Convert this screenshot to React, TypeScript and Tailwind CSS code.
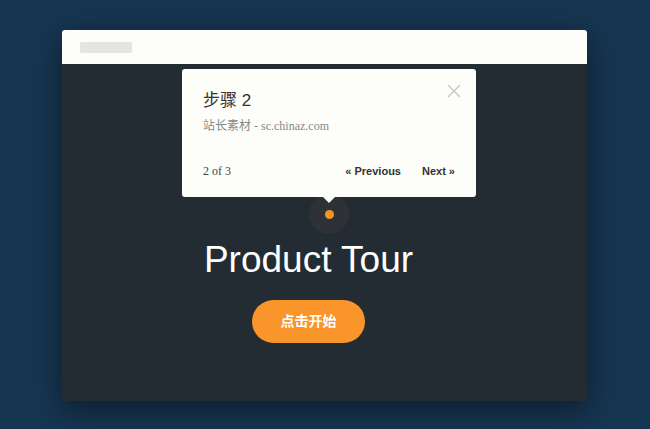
import { X } from 'lucide-react'

const SANS = { fontFamily: '"Liberation Sans", "Noto Sans CJK SC", sans-serif' }
const SERIF = { fontFamily: '"Liberation Serif", "Noto Sans CJK SC", serif' }

function Tooltip() {
  return (
    <div className="absolute left-[120px] top-[39px] w-[294px] h-[128px] rounded-[3px] bg-[#fdfdf9] pl-[21px] pr-[20px] pt-[20px] flex flex-col">
      <button className="absolute top-[11px] right-[11px] text-[#c4c4c0]" aria-label="Close">
        <X size={22} strokeWidth={1.4} />
      </button>
      <p className="text-[17px] leading-[24px] text-[#333]" style={SANS}>步骤 2</p>
      <p className="mt-[5px] text-[12px] leading-[16px] text-[#888]" style={SERIF}>站长素材 - sc.chinaz.com</p>
      <div className="mt-[28px] flex items-center pr-[1px]">
        <span className="text-[12px] text-[#444]" style={SERIF}>2 of 3</span>
        <button className="ml-auto text-[11px] font-bold text-[#333]" style={SANS}>« Previous</button>
        <button className="ml-[21px] text-[11px] font-bold text-[#333]" style={SANS}>Next »</button>
      </div>
      {/* arrow */}
      <div className="absolute left-[141px] -bottom-[6px] w-0 h-0 border-l-[6px] border-r-[6px] border-t-[6px] border-l-transparent border-r-transparent border-t-[#fdfdf9]" />
    </div>
  )
}

export default function App() {
  return (
    <div className="w-[650px] h-[429px] bg-[#163550] pl-[62px] pt-[30px] overflow-hidden">
      <div className="relative w-[525px] h-[371px] rounded-[3px] bg-[#232c32] shadow-[0_8px_28px_rgba(0,0,0,0.45)] flex flex-col">
        <div className="h-[34px] rounded-t-[3px] bg-[#fdfdf9] flex items-center pl-[18px]">
          <div className="w-[52px] h-[11px] rounded-[2px] bg-[#e4e4e0]" />
        </div>

        <div className="flex-1 flex flex-col items-center pr-[32px] pt-[177px]">
          <h1 className="text-[37px] leading-[37px] text-white" style={SANS}>Product Tour</h1>
          <button
            className="mt-[22px] w-[113px] h-[43px] rounded-full bg-[#f9952a] text-white text-[14px] font-bold"
            style={SANS}
          >
            点击开始
          </button>
        </div>

        {/* beacon */}
        <div className="absolute left-[247px] top-[164px] w-[40px] h-[40px] rounded-full bg-[#2e3135] flex items-center justify-center">
          <div className="w-[9px] h-[9px] rounded-full bg-[#f7931e]" />
        </div>

        <Tooltip />
      </div>
    </div>
  )
}
